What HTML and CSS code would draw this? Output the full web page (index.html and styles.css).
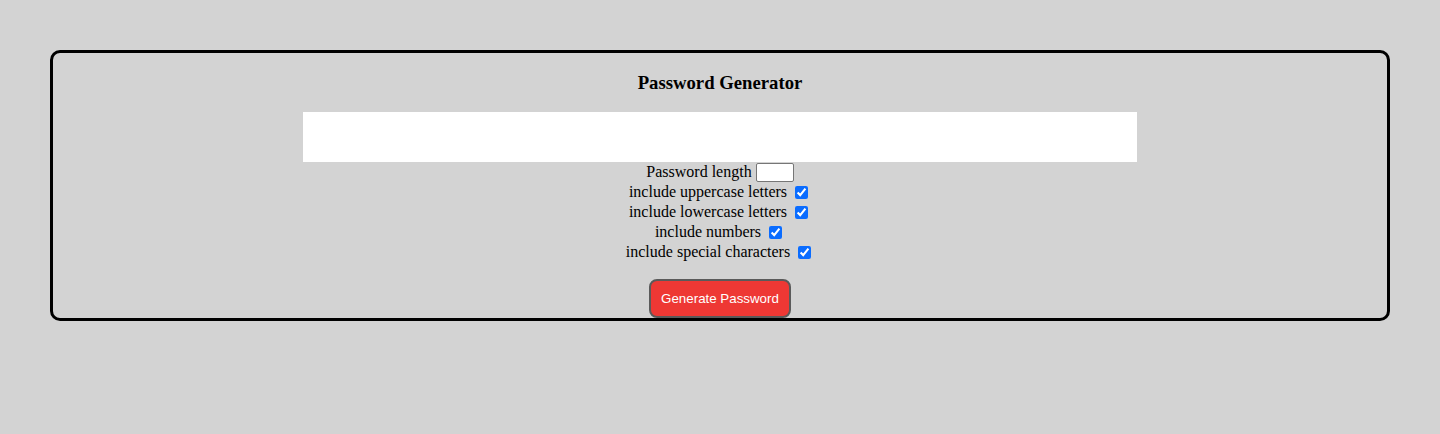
FILE: index.html
```html
<!DOCTYPE html>
<html lang="en">
<head>
<meta charset="utf-8">
<title>Password Generator</title>
<link rel="stylesheet" href="styles.css">
</head>
<body>
<div class="card">
  <h3 class="title">Password Generator</h3>
  <textarea class="output" readonly></textarea>
  <div class="options">
    <div class="row"><label for="len">Password length</label> <input id="len" class="len" type="text"></div>
    <div class="row"><label for="up">include uppercase letters</label> <input id="up" class="check" type="checkbox" checked></div>
    <div class="row"><label for="low">include lowercase letters</label> <input id="low" class="check" type="checkbox" checked></div>
    <div class="row"><label for="num">include numbers</label> <input id="num" class="check" type="checkbox" checked></div>
    <div class="row"><label for="spec">include special characters</label> <input id="spec" class="check" type="checkbox" checked></div>
  </div>
  <button class="generate" type="button">Generate Password</button>
</div>
</body>
</html>
```

FILE: styles.css
```css
html, body {
  margin: 0;
  padding: 0;
  background: #d3d3d3;
}

body {
  font-family: "Liberation Serif", "Times New Roman", serif;
  font-size: 16px;
  color: #000;
  padding: 50px;
}

.card {
  border: 3px solid #000;
  border-radius: 10px;
  text-align: center;
  height: 265px;
}

.title {
  font-size: 18.72px;
  font-weight: bold;
  margin: 19px 0 18px;
  line-height: 22px;
}

.output {
  display: block;
  margin: 0 auto;
  width: 834px;
  height: 50px;
  border: none;
  background: #fff;
  resize: none;
  padding: 0;
  outline: none;
}

.options {
  margin-bottom: 17px;
}

.row {
  height: 20px;
  line-height: 20px;
}

.len {
  width: 38px;
  height: 19px;
  box-sizing: border-box;
  border: 1px solid #767676;
  border-radius: 2px;
  background: #fff;
  padding: 1px 2px;
  vertical-align: middle;
  margin: 0;
  position: relative;
  top: -1px;
}

.check {
  width: 13px;
  height: 13px;
  margin: 0 3px 0 4px;
  vertical-align: middle;
  accent-color: #0a6cff;
  position: relative;
  top: -1px;
}

.generate {
  font-family: "Liberation Sans", Arial, sans-serif;
  font-size: 13.33px;
  color: #fff;
  background: #ee3834;
  border: 2px solid #5a5a5a;
  border-radius: 8px;
  width: 142px;
  height: 39px;
  padding: 0;
  cursor: pointer;
}
```
